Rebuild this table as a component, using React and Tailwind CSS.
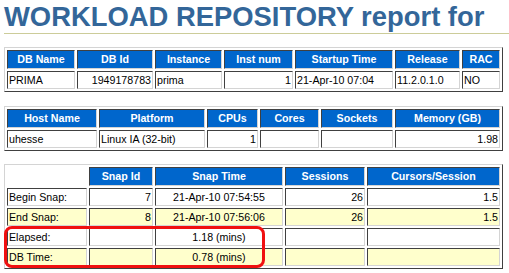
import React from "react";

// Inset cell borders and outset table frame, as a border="1" HTML table renders them
const cellBorder =
  "border border-t-[#404040] border-l-[#404040] border-b-[#d4d4d4] border-r-[#d4d4d4]";
const frameBorder =
  "border border-t-[#d4d4d4] border-l-[#d4d4d4] border-b-[#404040] border-r-[#404040]";

function Th({ children }) {
  return (
    <div
      className={`h-[19px] pt-[2px] px-[1px] leading-[12px] bg-[#0066cc] text-white font-bold text-center whitespace-nowrap overflow-hidden ${cellBorder}`}
    >
      {children}
    </div>
  );
}

function Td({ children, align = "left", bg = "white" }) {
  const alignCls =
    align === "right" ? "text-right" : align === "center" ? "text-center" : "text-left";
  const bgCls = bg === "yellow" ? "bg-[#ffffcc]" : "bg-white";
  return (
    <div
      className={`h-[18px] pt-[2px] px-[1px] leading-[12px] text-black whitespace-nowrap overflow-hidden ${alignCls} ${bgCls} ${cellBorder}`}
    >
      {children}
    </div>
  );
}

export default function App() {
  return (
    <div className="w-[509px] h-[273px] overflow-hidden bg-white pl-[4px] font-['Liberation_Sans',Arial,Helvetica,sans-serif]">
      <h1 className="pt-[1px] leading-[32px] text-[27.4px] font-bold text-[#336699] border-b border-[#cccc99] whitespace-nowrap">
        WORKLOAD REPOSITORY report for
      </h1>

      {/* Database / instance */}
      <div
        className={`mt-[13px] w-fit grid grid-cols-[68px_76px_67px_69px_98px_65px_38px] gap-[2px] p-[2px] text-[10.67px] ${frameBorder}`}
      >
        <Th>DB Name</Th>
        <Th>DB Id</Th>
        <Th>Instance</Th>
        <Th>Inst num</Th>
        <Th>Startup Time</Th>
        <Th>Release</Th>
        <Th>RAC</Th>
        <Td>PRIMA</Td>
        <Td align="right">1949178783</Td>
        <Td>prima</Td>
        <Td align="right">1</Td>
        <Td>21-Apr-10 07:04</Td>
        <Td>11.2.0.1.0</Td>
        <Td>NO</Td>
      </div>

      {/* Host */}
      <div
        className={`mt-[14px] w-fit grid grid-cols-[90px_106px_51px_59px_72px_105px] gap-[2px] p-[2px] text-[10.67px] ${frameBorder}`}
      >
        <Th>Host Name</Th>
        <Th>Platform</Th>
        <Th>CPUs</Th>
        <Th>Cores</Th>
        <Th>Sockets</Th>
        <Th>Memory (GB)</Th>
        <Td>uhesse</Td>
        <Td>Linux IA (32-bit)</Td>
        <Td align="right">1</Td>
        <Td></Td>
        <Td></Td>
        <Td align="right">1.98</Td>
      </div>

      {/* Snapshots */}
      <div className="relative mt-[13px] w-fit">
        <div
          className={`w-fit grid grid-cols-[80px_64px_128px_80px_133px] gap-[2px] p-[2px] text-[10.67px] ${frameBorder}`}
        >
          <div className="h-[19px]"></div>
          <Th>Snap Id</Th>
          <Th>Snap Time</Th>
          <Th>Sessions</Th>
          <Th>Cursors/Session</Th>

          <Td>Begin Snap:</Td>
          <Td align="right">7</Td>
          <Td align="center">21-Apr-10 07:54:55</Td>
          <Td align="right">26</Td>
          <Td align="right">1.5</Td>

          <Td bg="yellow">End Snap:</Td>
          <Td bg="yellow" align="right">8</Td>
          <Td bg="yellow" align="center">21-Apr-10 07:56:06</Td>
          <Td bg="yellow" align="right">26</Td>
          <Td bg="yellow" align="right">1.5</Td>

          <Td>Elapsed:</Td>
          <Td></Td>
          <Td align="center">1.18 (mins)</Td>
          <Td></Td>
          <Td></Td>

          <Td bg="yellow">DB Time:</Td>
          <Td bg="yellow"></Td>
          <Td bg="yellow" align="center">0.78 (mins)</Td>
          <Td bg="yellow"></Td>
          <Td bg="yellow"></Td>
        </div>
        {/* highlight marker around elapsed / DB time rows */}
        <div className="absolute left-0 top-[62px] w-[261px] h-[42px] border-[3px] border-[#f01010] rounded-[8px] pointer-events-none"></div>
      </div>
    </div>
  );
}
